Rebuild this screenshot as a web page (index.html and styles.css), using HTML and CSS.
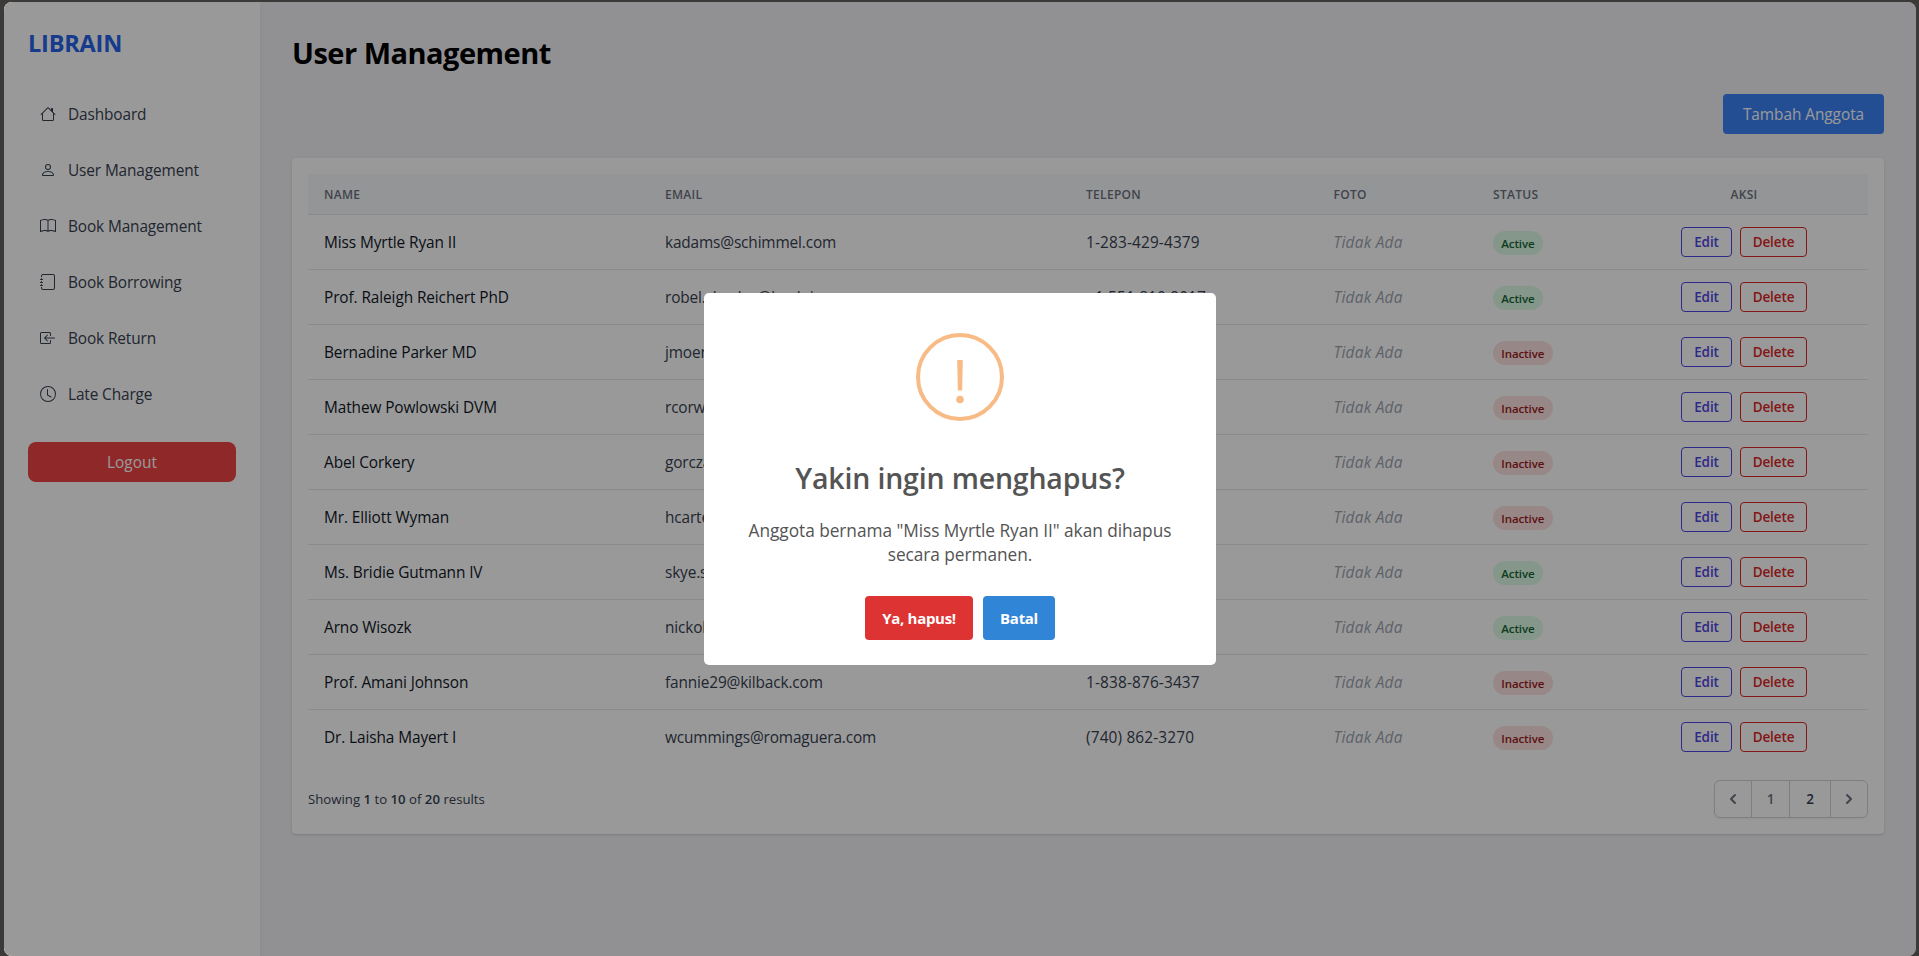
FILE: index.html
```html
<!DOCTYPE html>
<html lang="id">
<head>
<meta charset="utf-8">
<title>User Management</title>
<link rel="stylesheet" href="styles.css">
</head>
<body>
<div class="window">
  <aside class="sidebar">
    <div class="logo">LIBRAIN</div>
    <nav class="nav">
      <a class="nav-link"><svg class="nav-icon" viewBox="0 0 16 16"><path d="M8.707 1.5a1 1 0 0 0-1.414 0L.646 8.146a.5.5 0 0 0 .708.708L2 8.207V13.5A1.5 1.5 0 0 0 3.5 15h9a1.5 1.5 0 0 0 1.5-1.5V8.207l.646.647a.5.5 0 0 0 .708-.708L13 5.793V2.5a.5.5 0 0 0-.5-.5h-1a.5.5 0 0 0-.5.5v1.293zM13 7.207V13.5a.5.5 0 0 1-.5.5h-9a.5.5 0 0 1-.5-.5V7.207l5-5z"/></svg><span>Dashboard</span></a>
      <a class="nav-link"><svg class="nav-icon" viewBox="0 0 16 16"><path d="M8 8a3 3 0 1 0 0-6 3 3 0 0 0 0 6m2-3a2 2 0 1 1-4 0 2 2 0 0 1 4 0m4 8c0 1-1 1-1 1H3s-1 0-1-1 1-4 6-4 6 3 6 4m-1-.004c-.001-.246-.154-.986-.832-1.664C11.516 10.68 10.289 10 8 10s-3.516.68-4.168 1.332c-.678.678-.83 1.418-.832 1.664z"/></svg><span>User Management</span></a>
      <a class="nav-link"><svg class="nav-icon" viewBox="0 0 16 16"><path d="M1 2.828c.885-.37 2.154-.769 3.388-.893 1.33-.134 2.458.063 3.112.752v9.746c-.935-.53-2.12-.603-3.213-.493-1.18.12-2.37.461-3.287.811zm7.5-.141c.654-.689 1.782-.886 3.112-.752 1.234.124 2.503.523 3.388.893v9.923c-.918-.35-2.107-.692-3.287-.81-1.094-.111-2.278-.039-3.213.492zM8 1.783C7.015.936 5.587.81 4.287.94c-1.514.153-3.042.672-3.994 1.105A.5.5 0 0 0 0 2.5v11a.5.5 0 0 0 .707.455c.882-.4 2.303-.881 3.68-1.02 1.409-.142 2.59.087 3.223.877a.5.5 0 0 0 .78 0c.633-.79 1.814-1.019 3.222-.877 1.378.139 2.8.62 3.681 1.02A.5.5 0 0 0 16 13.5v-11a.5.5 0 0 0-.293-.455c-.952-.433-2.48-.952-3.994-1.105C10.413.809 8.985.936 8 1.783"/></svg><span>Book Management</span></a>
      <a class="nav-link"><svg class="nav-icon" viewBox="0 0 16 16"><path d="M3 0h10a2 2 0 0 1 2 2v12a2 2 0 0 1-2 2H3a2 2 0 0 1-2-2v-1h1v1a1 1 0 0 0 1 1h10a1 1 0 0 0 1-1V2a1 1 0 0 0-1-1H3a1 1 0 0 0-1 1v1H1V2a2 2 0 0 1 2-2"/><path d="M1 5v-.5a.5.5 0 0 1 1 0V5h.5a.5.5 0 0 1 0 1h-2a.5.5 0 0 1 0-1zm0 3v-.5a.5.5 0 0 1 1 0V8h.5a.5.5 0 0 1 0 1h-2a.5.5 0 0 1 0-1zm0 3v-.5a.5.5 0 0 1 1 0v.5h.5a.5.5 0 0 1 0 1h-2a.5.5 0 0 1 0-1z"/></svg><span>Book Borrowing</span></a>
      <a class="nav-link"><svg class="nav-icon" viewBox="0 0 16 16"><path d="M10 3.5a.5.5 0 0 0-.5-.5h-8a.5.5 0 0 0-.5.5v9a.5.5 0 0 0 .5.5h8a.5.5 0 0 0 .5-.5v-2a.5.5 0 0 1 1 0v2A1.500 1.500 0 0 1 9.500 14h-8A1.500 1.500 0 0 1 0 12.500v-9A1.500 1.500 0 0 1 1.500 2h8A1.500 1.500 0 0 1 11 3.500v2a.5.5 0 0 1-1 0z"/><path d="M4.146 8.354a.5.5 0 0 1 0-.708l3-3a.5.5 0 1 1 .708.708L5.707 7.500H14.500a.5.5 0 0 1 0 1H5.707l2.147 2.146a.5.5 0 0 1-.708.708z"/></svg><span>Book Return</span></a>
      <a class="nav-link"><svg class="nav-icon" viewBox="0 0 16 16"><path d="M8 3.500a.5.5 0 0 0-1 0V9a.5.5 0 0 0 .252.434l3.500 2a.5.5 0 0 0 .496-.868L8 8.710z"/><path d="M8 16A8 8 0 1 0 8 0a8 8 0 0 0 0 16m7-8A7 7 0 1 1 1 8a7 7 0 0 1 14 0"/></svg><span>Late Charge</span></a>
    </nav>
    <button class="logout">Logout</button>
  </aside>

  <main class="main">
    <h1 class="title">User Management</h1>
    <div class="toolbar"><button class="add">Tambah Anggota</button></div>
    <section class="card">
      <div class="row head"><div>NAME</div><div>EMAIL</div><div>TELEPON</div><div>FOTO</div><div>STATUS</div><div class="actions">AKSI</div></div>
      <div class="row"><div class="name">Miss Myrtle Ryan II</div><div class="email">kadams@schimmel.com</div><div class="tel">1-283-429-4379</div><div class="none">Tidak Ada</div><div><span class="badge on">Active</span></div><div class="actions"><button class="btn edit">Edit</button><button class="btn del">Delete</button></div></div>
      <div class="row"><div class="name">Prof. Raleigh Reichert PhD</div><div class="email">robel.chesley@koelpin.com</div><div class="tel">+1.551.810.9017</div><div class="none">Tidak Ada</div><div><span class="badge on">Active</span></div><div class="actions"><button class="btn edit">Edit</button><button class="btn del">Delete</button></div></div>
      <div class="row"><div class="name">Bernadine Parker MD</div><div class="email">jmoen</div><div></div><div class="none">Tidak Ada</div><div><span class="badge off">Inactive</span></div><div class="actions"><button class="btn edit">Edit</button><button class="btn del">Delete</button></div></div>
      <div class="row"><div class="name">Mathew Powlowski DVM</div><div class="email">rcorwin</div><div></div><div class="none">Tidak Ada</div><div><span class="badge off">Inactive</span></div><div class="actions"><button class="btn edit">Edit</button><button class="btn del">Delete</button></div></div>
      <div class="row"><div class="name">Abel Corkery</div><div class="email">gorczany</div><div></div><div class="none">Tidak Ada</div><div><span class="badge off">Inactive</span></div><div class="actions"><button class="btn edit">Edit</button><button class="btn del">Delete</button></div></div>
      <div class="row"><div class="name">Mr. Elliott Wyman</div><div class="email">hcarter</div><div></div><div class="none">Tidak Ada</div><div><span class="badge off">Inactive</span></div><div class="actions"><button class="btn edit">Edit</button><button class="btn del">Delete</button></div></div>
      <div class="row"><div class="name">Ms. Bridie Gutmann IV</div><div class="email">skye.s</div><div></div><div class="none">Tidak Ada</div><div><span class="badge on">Active</span></div><div class="actions"><button class="btn edit">Edit</button><button class="btn del">Delete</button></div></div>
      <div class="row"><div class="name">Arno Wisozk</div><div class="email">nickol</div><div></div><div class="none">Tidak Ada</div><div><span class="badge on">Active</span></div><div class="actions"><button class="btn edit">Edit</button><button class="btn del">Delete</button></div></div>
      <div class="row"><div class="name">Prof. Amani Johnson</div><div class="email">fannie29@kilback.com</div><div class="tel">1-838-876-3437</div><div class="none">Tidak Ada</div><div><span class="badge off">Inactive</span></div><div class="actions"><button class="btn edit">Edit</button><button class="btn del">Delete</button></div></div>
      <div class="row last"><div class="name">Dr. Laisha Mayert I</div><div class="email">wcummings@romaguera.com</div><div class="tel">(740) 862-3270</div><div class="none">Tidak Ada</div><div><span class="badge off">Inactive</span></div><div class="actions"><button class="btn edit">Edit</button><button class="btn del">Delete</button></div></div>
      <div class="footer">
        <p class="summary">Showing <b>1</b> to <b>10</b> of <b>20</b> results</p>
        <div class="pager">
          <a class="page arrow"><svg viewBox="0 0 20 20"><path fill-rule="evenodd" d="M12.707 5.293a1 1 0 010 1.414L9.414 10l3.293 3.293a1 1 0 01-1.414 1.414l-4-4a1 1 0 010-1.414l4-4a1 1 0 011.414 0z"/></svg></a>
          <a class="page">1</a>
          <a class="page current">2</a>
          <a class="page arrow"><svg viewBox="0 0 20 20"><path fill-rule="evenodd" d="M7.293 14.707a1 1 0 010-1.414L10.586 10 7.293 6.707a1 1 0 011.414-1.414l4 4a1 1 0 010 1.414l-4 4a1 1 0 01-1.414 0z"/></svg></a>
        </div>
      </div>
    </section>
  </main>

  <div class="backdrop">
    <div class="modal">
      <svg class="warn" viewBox="0 0 88 88"><circle cx="44" cy="44" r="42"/><path d="M41.200 27h5.600l-.6 30.500h-4.400z"/><circle class="dot" cx="44" cy="66.500" r="3.800"/></svg>
      <h2 class="modal-title">Yakin ingin menghapus?</h2>
      <p class="modal-text">Anggota bernama "Miss Myrtle Ryan II" akan dihapus<br>secara permanen.</p>
      <div class="modal-actions"><button class="confirm">Ya, hapus!</button><button class="cancel">Batal</button></div>
    </div>
  </div>
</div>
</body>
</html>
```
FILE: styles.css
```css
* { box-sizing: border-box; margin: 0; }
body { background: #3b3a39; padding: 2px 3px 0 4px; font-family: "Open Sans", "Noto Sans", sans-serif; font-size: 15.400px; line-height: 24px; color: #374151; }
button { font: inherit; border: 0; padding: 0; }

.window { position: relative; display: flex; height: 954px; border-radius: 8px; overflow: hidden; background: #f2f2f6; }

.sidebar { width: 256px; padding: 24px; background: #fff; box-shadow: 0 4px 6px rgba(0,0,0,.06); }
.logo { height: 68px; line-height: 34px; font-size: 23.500px; font-weight: 700; color: #2563eb; letter-spacing: -.2px; }
.nav { display: grid; gap: 16px; }
.nav-link { display: flex; align-items: center; gap: 12px; height: 40px; padding: 0 12px; letter-spacing: -.12px; }
.nav-link span { padding-top: 2px; }
.nav-icon { width: 16px; height: 16px; fill: currentColor; }
.logout { display: block; width: 208px; height: 40px; margin-top: 28px; padding-top: 2px; border-radius: 8px; background: #ef4444; color: #fff; }

.main { flex: 1; padding: 32px; }
.title { height: 36px; line-height: 38px; font-size: 29px; font-weight: 700; color: #000; letter-spacing: -.5px; }
.toolbar { display: flex; justify-content: flex-end; margin: 24px 0; }
.add { width: 161px; height: 40px; padding-top: 2px; border-radius: 4px; background: #3b82f6; color: #fff; letter-spacing: -.05px; }

.card { padding: 16px; height: 676px; border-radius: 4px; background: #fff; box-shadow: 0 1px 3px rgba(0,0,0,.1), 0 1px 2px rgba(0,0,0,.06); }
.row { display: grid; grid-template-columns: 341px 421px 247.500px 159.500px 143px 248px; align-items: center; height: 55px; border-bottom: 1px solid #e5e7eb; }
.row > div { padding: 0 16px; white-space: nowrap; letter-spacing: -.15px; }
.row > .name, .row > .email, .row > .tel, .row > .none { padding-top: 2px; }
.row > .name { color: #111827; letter-spacing: -.1px; }
.row > .tel { letter-spacing: .15px; }
.row > .none { color: #9ca3af; font-style: italic; letter-spacing: .25px; }
.row > .actions { display: flex; justify-content: center; gap: 8px; padding: 0; }
.row.head { height: 41px; padding-top: 2px; background: #f7f9fb; color: #6b7280; font-size: 12px; font-weight: 600; }
.row.head > div { letter-spacing: .3px; }
.row.last { height: 54px; border: 0; }
.badge { display: block; width: fit-content; height: 24px; margin-top: 2px; padding: 0 8.300px; border-radius: 12px; font-size: 11.500px; font-weight: 600; line-height: 25px; letter-spacing: -.1px; }
.on { background: #dcfce7; color: #166534; }
.off { background: #fee2e2; color: #991b1b; }
.btn { height: 30px; border: 1px solid; border-radius: 4px; background: none; font-size: 13.500px; font-weight: 600; letter-spacing: -.1px; }
.edit { width: 51px; color: #4f46e5; }
.del { width: 67px; color: #dc2626; }

.footer { display: flex; justify-content: space-between; align-items: center; margin-top: 16px; }
.summary { font-size: 13.200px; }
.summary b { font-weight: 600; }
.pager { display: grid; grid-template-columns: 37px 38px 41px 36px; height: 38px; border: 1px solid #d1d5db; border-radius: 6px; width: 154px; box-shadow: 0 1px 2px rgba(0,0,0,.05); }
.page { display: flex; align-items: center; justify-content: center; border-right: 1px solid #d1d5db; font-size: 13.500px; font-weight: 600; color: #6b7280; }
.page:last-child { border: 0; }
.current { color: #374151; }
.arrow svg { width: 20px; height: 20px; fill: #6b7280; }

.backdrop { position: absolute; inset: 0; background: rgba(0,0,0,.4); display: flex; justify-content: center; align-items: flex-start; padding-top: 291px; }
.modal { width: 512px; height: 372px; border-radius: 5px; background: #fff; color: #545454; text-align: center; }
.warn { display: block; width: 88px; height: 88px; margin: 40px auto 0; fill: none; stroke: #f8bb86; stroke-width: 4; }
.warn path, .warn .dot { fill: #f8bb86; stroke: none; }
.modal-title { margin-top: 35px; line-height: 44px; font-size: 28.500px; font-weight: 600; letter-spacing: -.18px; }
.modal-text { margin-top: 19px; font-size: 17.300px; line-height: 24px; letter-spacing: -.05px; }
.modal-actions { display: flex; justify-content: center; gap: 10px; margin-top: 29px; }
.modal-actions button { height: 44px; border-radius: 4px; color: #fff; font-size: 15px; font-weight: 700; letter-spacing: -.3px; }
.confirm { width: 108px; background: #d33; }
.cancel { width: 72px; background: #3085d6; }
```
